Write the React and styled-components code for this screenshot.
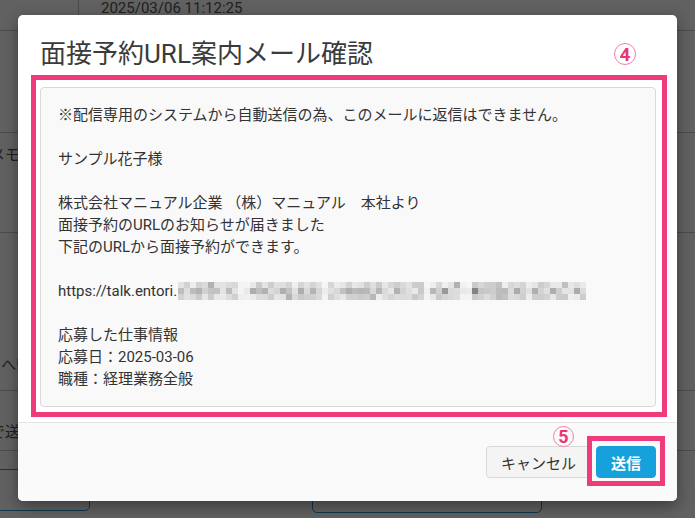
import React, { useMemo } from 'react';
import styled, { createGlobalStyle } from 'styled-components';

const GlobalStyle = createGlobalStyle`
  html, body {
    margin: 0;
    padding: 0;
  }
  body {
    font-family: Roboto, "Noto Sans CJK JP", sans-serif;
    background: #fff;
  }
`;

/* page underneath the modal */
const Page = styled.div`
  position: relative;
  width: 695px;
  height: 518px;
  overflow: hidden;
  background: #fff;
  color: #505050;
  font-size: 15px;
  display: flex;
  flex-direction: column;
`;

const Row = styled.div`
  box-sizing: border-box;
  flex-shrink: 0;
  display: flex;
  align-items: ${(p) => p.$align || 'center'};
  height: ${(p) => p.$h}px;
  padding-top: ${(p) => p.$pt || 0}px;
  padding-bottom: ${(p) => p.$pb || 0}px;
  border-bottom: 1px solid #c6c6c6;
`;

const HeadCell = styled.div`
  width: 78px;
  align-self: stretch;
  border-right: 1px solid #c6c6c6;
`;

const DateText = styled.span`
  margin-left: 22px;
  line-height: 16px;
  font-size: 15px;
  color: #555;
`;

const Clip = styled.div`
  width: 20px;
  overflow: hidden;
  display: flex;
  justify-content: flex-end;
  white-space: nowrap;
  line-height: 18px;
`;

const BottomRow = styled.div`
  display: flex;
  align-items: flex-start;
  padding-top: 18px;
`;

const GhostButton = styled.div`
  box-sizing: border-box;
  height: 42px;
  width: ${(p) => p.$w}px;
  margin-left: ${(p) => p.$ml}px;
  margin-top: ${(p) => p.$mt || 0}px;
  border: 1px solid #2d94c9;
  border-radius: 5px;
  color: #2d94c9;
  display: flex;
  align-items: center;
  justify-content: flex-end;
  padding-right: 6px;
  font-size: 17px;
`;

/* modal */
const Overlay = styled.div`
  position: absolute;
  inset: 0;
  background: rgba(0, 0, 0, 0.62);
  display: flex;
  justify-content: center;
  align-items: flex-start;
  padding-top: 15px;
`;

const Modal = styled.div`
  position: relative;
  width: 659px;
  background: #fff;
  border-radius: 5px;
  box-shadow: 0 5px 15px rgba(0, 0, 0, 0.4);
`;

const Header = styled.div`
  padding: 23px 22px 0;
`;

const Title = styled.h4`
  margin: 0;
  font-size: 26px;
  line-height: 32px;
  font-weight: 400;
  color: #3b3b3b;
`;

const Body = styled.div`
  padding: 17px 21px 15px 22px;
`;

const Marked = styled.div`
  position: relative;
  display: ${(p) => (p.$inline ? 'inline-flex' : 'block')};

  &::after {
    content: '';
    position: absolute;
    top: ${(p) => p.$t}px;
    left: ${(p) => p.$l}px;
    right: ${(p) => p.$r}px;
    bottom: ${(p) => p.$b}px;
    border: 5px solid #ef3a7b;
    pointer-events: none;
  }
`;

const Badge = styled.span`
  position: absolute;
  top: ${(p) => p.$top}px;
  left: ${(p) => p.$left}px;
  box-sizing: border-box;
  width: ${(p) => p.$size}px;
  height: ${(p) => p.$size}px;
  border: 1px solid #f27ea8;
  border-radius: 50%;
  display: flex;
  align-items: center;
  justify-content: center;
  color: #ec3576;
  font-family: Roboto, sans-serif;
  font-weight: 700;
  font-size: ${(p) => p.$size - 3}px;
  line-height: 1;
`;

const MailBox = styled.div`
  border: 1px solid #d9d9d9;
  border-radius: 4px;
  background: #f9f9f9;
  padding: 16px 17px;
  color: #333;
  font-size: 15px;
  line-height: 22px;
  white-space: pre-wrap;
`;

const Line = styled.div`
  height: 22px;
  display: flex;
  align-items: center;
`;

const Footer = styled.div`
  border-top: 1px solid #e5e5e5;
  background: #fafafa;
  border-radius: 0 0 5px 5px;
  padding: 23px 21px 23px;
  display: flex;
  justify-content: flex-end;
  align-items: center;
  gap: 5px;
`;

const Button = styled.button`
  height: 32px;
  padding: 0 14px;
  border-radius: 4px;
  font-family: Roboto, "Noto Sans CJK JP", sans-serif;
  font-size: 15px;
  cursor: pointer;
  border: 1px solid ${(p) => (p.$primary ? '#16a1dc' : '#d9d9d9')};
  background: ${(p) => (p.$primary ? '#16a1dc' : '#f4f4f4')};
  color: ${(p) => (p.$primary ? '#fff' : '#333')};
  font-weight: ${(p) => (p.$primary ? 700 : 400)};
`;

const MosaicSvg = styled.svg`
  display: block;
  margin-left: 1px;
`;

const GAPS = [10, 11, 24, 41, 47, 48];

function Mosaic() {
  const cells = useMemo(() => {
    let seed = 11;
    const rnd = () => {
      seed = (seed * 9301 + 49297) % 233280;
      return seed / 233280;
    };
    const out = [];
    for (let c = 0; c < 68; c++) {
      for (let r = 0; r < 3; r++) {
        const gap = GAPS.includes(c);
        let v = gap ? 230 + rnd() * 15 : 170 + rnd() * 65;
        if (!gap && rnd() < 0.07) v = 130 + rnd() * 30;
        if (r !== 1) v = v + (248 - v) * 0.4;
        const g = Math.round(v);
        out.push({ x: c * 6, y: r * 6, fill: `rgb(${g},${g},${g})` });
      }
    }
    return out;
  }, []);

  return (
    <MosaicSvg width="408" height="18" viewBox="0 0 408 18">
      {cells.map((cell, i) => (
        <rect key={i} x={cell.x} y={cell.y} width="6" height="6" fill={cell.fill} />
      ))}
    </MosaicSvg>
  );
}

const mail = [
  '※配信専用のシステムから自動送信の為、このメールに返信はできません。',
  '',
  'サンプル花子様',
  '',
  '株式会社マニュアル企業 （株）マニュアル　本社より',
  '面接予約のURLのお知らせが届きました',
  '下記のURLから面接予約ができます。',
  '',
  'URL',
  '',
  '応募した仕事情報',
  '応募日：2025-03-06',
  '職種：経理業務全般',
];

export default function App() {
  return (
    <>
      <GlobalStyle />
      <Page>
        <Row $h={31} $align="flex-start">
          <HeadCell />
          <DateText>2025/03/06 11:12:25</DateText>
        </Row>
        <Row $h={102} />
        <Row $h={100} $align="flex-start" $pt={13}>
          <Clip>メモ</Clip>
        </Row>
        <Row $h={158} $align="flex-end" $pb={16}>
          <Clip>へ!</Clip>
        </Row>
        <Row $h={60} $align="flex-end" $pb={9}>
          <Clip>で送</Clip>
        </Row>
        <BottomRow>
          <GhostButton $w={110} $ml={-20}>リンク</GhostButton>
          <GhostButton $w={230} $ml={222} $mt={2} />
        </BottomRow>

        <Overlay>
          <Modal>
            <Header>
              <Title>面接予約URL案内メール確認</Title>
            </Header>
            <Badge $top={28} $left={596} $size={22}>4</Badge>
            <Body>
              <Marked $t={-12} $l={-9} $r={-11} $b={-10}>
                <MailBox>
                  {mail.map((text, i) =>
                    text === 'URL' ? (
                      <Line key={i}>
                        https://talk.entori.
                        <Mosaic />
                      </Line>
                    ) : (
                      <Line key={i}>{text}</Line>
                    )
                  )}
                </MailBox>
              </Marked>
            </Body>
            <Footer>
              <Button>キャンセル</Button>
              <Marked $inline $t={-10} $l={-9} $r={-9} $b={-8}>
                <Badge $top={-20} $left={-43} $size={21}>5</Badge>
                <Button $primary>送信</Button>
              </Marked>
            </Footer>
          </Modal>
        </Overlay>
      </Page>
    </>
  );
}
